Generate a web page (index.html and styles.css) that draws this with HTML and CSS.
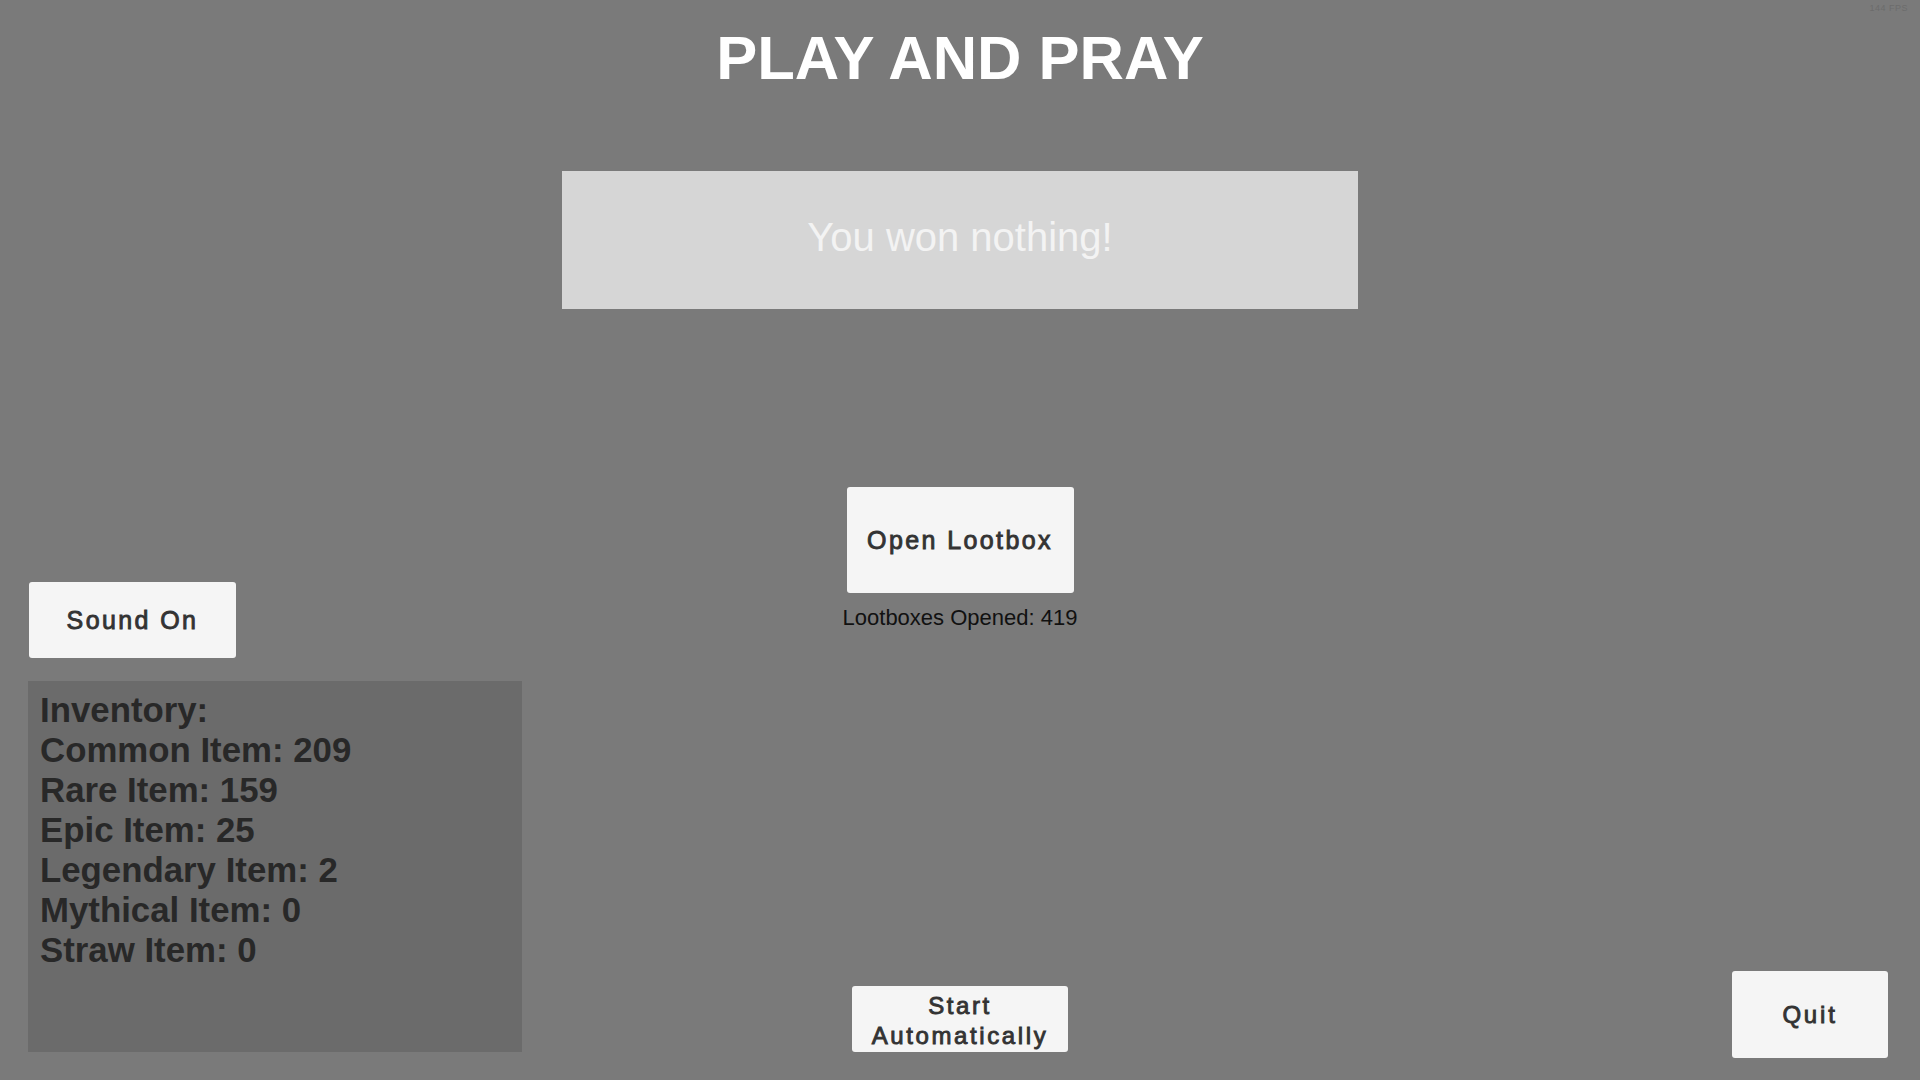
FILE: index.html
```html
<!DOCTYPE html>
<html lang="en">
<head>
<meta charset="utf-8">
<title>Play and Pray</title>
<link rel="stylesheet" href="styles.css">
</head>
<body>
<div class="screen">
  <div class="fps">144 FPS</div>
  <h1 class="title">PLAY AND PRAY</h1>
  <div class="result"><span>You won nothing!</span></div>
  <div class="stage">
    <div class="col-left">
      <button class="btn btn-sound">Sound On</button>
      <div class="inventory">
        <div>Inventory:</div>
        <div>Common Item: 209</div>
        <div>Rare Item: 159</div>
        <div>Epic Item: 25</div>
        <div>Legendary Item: 2</div>
        <div>Mythical Item: 0</div>
        <div>Straw Item: 0</div>
      </div>
    </div>
    <div class="col-center">
      <button class="btn btn-open">Open Lootbox</button>
      <div class="count">Lootboxes Opened: 419</div>
      <button class="btn btn-auto">Start<br>Automatically</button>
    </div>
    <div class="col-right">
      <button class="btn btn-quit">Quit</button>
    </div>
  </div>
</div>
</body>
</html>
```

FILE: styles.css
```css
html, body {
  margin: 0;
  padding: 0;
}
body {
  background: #7a7a7a;
  font-family: "Liberation Sans", Arial, sans-serif;
}
.screen {
  position: relative;
  width: 1920px;
  height: 1080px;
  display: flex;
  flex-direction: column;
  align-items: center;
  overflow: hidden;
}
.fps {
  position: absolute;
  top: 3px;
  right: 12px;
  font-size: 9px;
  color: #6c6c6c;
  letter-spacing: 0.5px;
}
.title {
  margin: 28px 0 0;
  font-size: 61.5px;
  line-height: 60px;
  font-weight: 700;
  color: #ffffff;
}
.result {
  margin-top: 83px;
  width: 796px;
  height: 138px;
  background: #d6d6d6;
  display: flex;
  align-items: center;
  justify-content: center;
  box-sizing: border-box;
  padding-bottom: 6px;
}
.result span {
  font-size: 40px;
  color: #f3f3f3;
}
.stage {
  flex: 1;
  width: 100%;
  display: grid;
  grid-template-columns: 1fr 1fr 1fr;
}
.btn {
  font-family: "Liberation Sans", Arial, sans-serif;
  font-weight: 400;
  color: #333333;
  -webkit-text-stroke: 0.9px #333333;
  background: #f5f5f5;
  border: none;
  border-radius: 3px;
  padding: 0;
  letter-spacing: 2.4px;
  display: flex;
  align-items: center;
  justify-content: center;
  text-align: center;
}
.col-left {
  display: flex;
  flex-direction: column;
  justify-content: flex-end;
  align-items: flex-start;
  padding: 0 0 28px 28px;
}
.btn-sound {
  width: 207px;
  height: 76px;
  margin-left: 1px;
  font-size: 25px;
}
.inventory {
  margin-top: 23px;
  width: 494px;
  height: 371px;
  box-sizing: border-box;
  background: #6b6b6b;
  padding: 9px 12px;
  font-size: 34.8px;
  line-height: 40px;
  font-weight: 700;
  color: #282828;
}
.col-center {
  display: flex;
  flex-direction: column;
  align-items: center;
  padding: 178px 0 28px;
}
.btn-open {
  width: 227px;
  height: 106px;
  font-size: 25px;
}
.count {
  margin-top: 12px;
  font-size: 22px;
  line-height: 26px;
  color: #111111;
}
.btn-auto {
  margin-top: auto;
  width: 216px;
  height: 66px;
  box-sizing: border-box;
  padding-top: 4px;
  font-size: 24px;
  line-height: 30px;
  letter-spacing: 2.6px;
}
.col-right {
  display: flex;
  justify-content: flex-end;
  align-items: flex-end;
  padding: 0 32px 22px 0;
}
.btn-quit {
  width: 156px;
  height: 87px;
  font-size: 24px;
  letter-spacing: 2.8px;
}
```
